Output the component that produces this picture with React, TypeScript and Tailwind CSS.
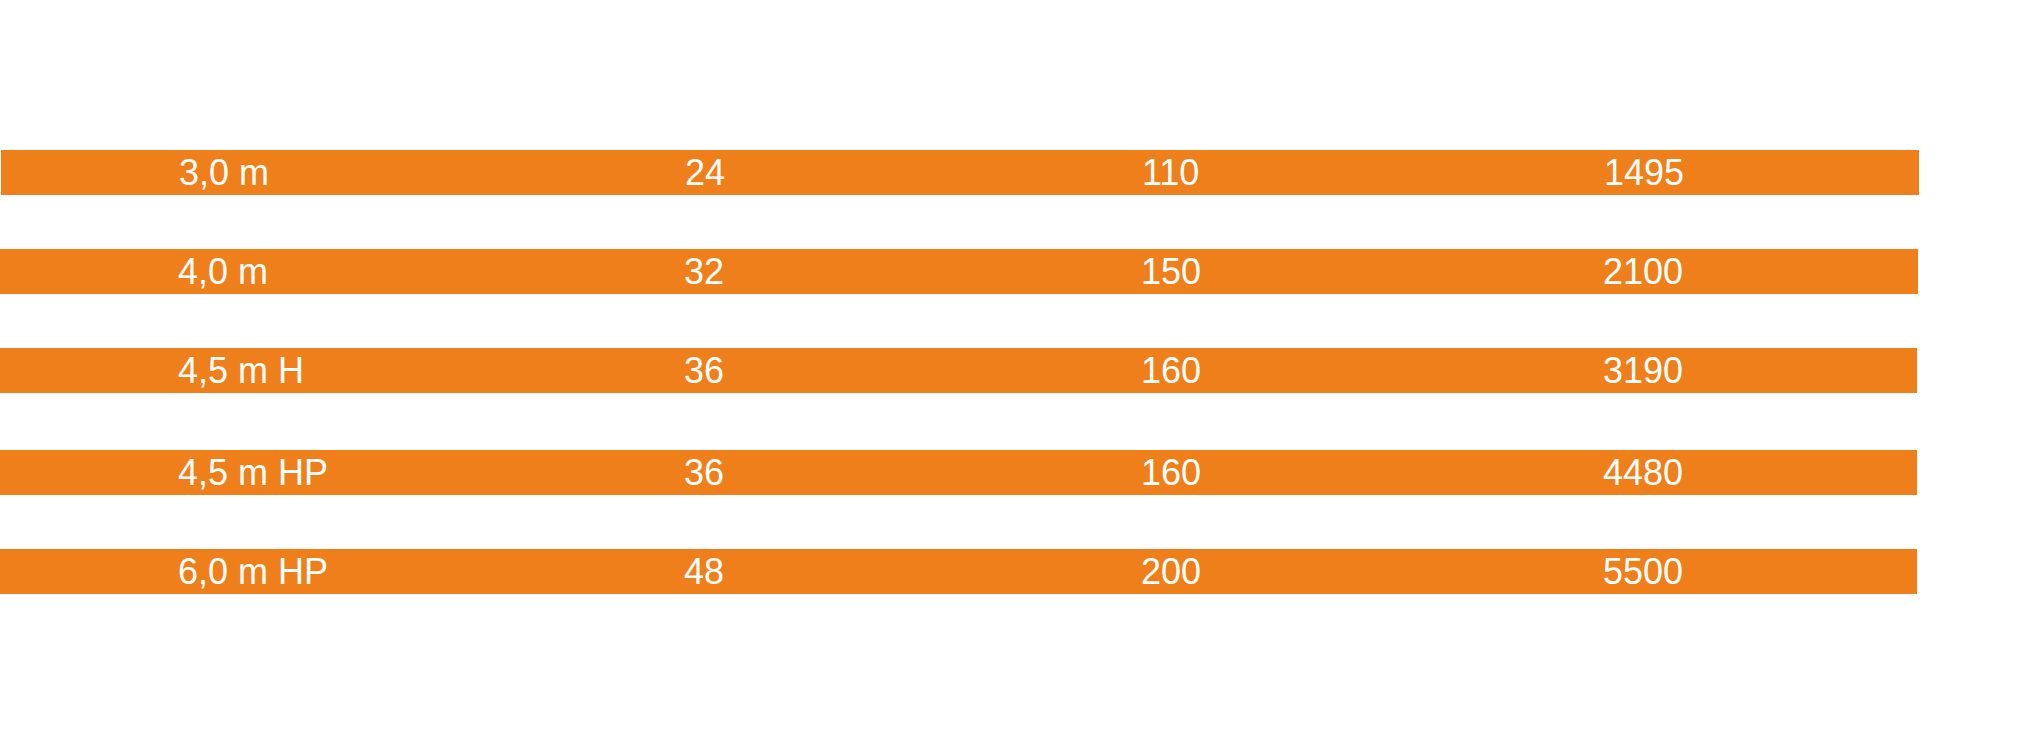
const rows = [
  { size: "3,0 m", a: "24", b: "110", c: "1495", cls: "mt-[150px] ml-px w-[1918px]" },
  { size: "4,0 m", a: "32", b: "150", c: "2100", cls: "mt-[54px] w-[1918px]" },
  { size: "4,5 m H", a: "36", b: "160", c: "3190", cls: "mt-[54px] w-[1917px]" },
  { size: "4,5 m HP", a: "36", b: "160", c: "4480", cls: "mt-[57px] w-[1917px]" },
  { size: "6,0 m HP", a: "48", b: "200", c: "5500", cls: "mt-[54px] w-[1917px]" },
];

export default function App() {
  return (
    <div className="w-[2021px] h-[738px] bg-white overflow-hidden font-['Liberation_Sans',Arial,sans-serif] text-white">
      <div className="flex flex-col">
        {rows.map((r) => (
          <div
            key={r.size + r.c}
            className={`${r.cls} h-[45px] bg-[#ef7f1a] grid grid-cols-[506px_457px_462px_1fr] items-center pl-[178px] text-[36px] leading-[45px]`}
          >
            <span>{r.size}</span>
            <span>{r.a}</span>
            <span>{r.b}</span>
            <span>{r.c}</span>
          </div>
        ))}
      </div>
    </div>
  );
}
